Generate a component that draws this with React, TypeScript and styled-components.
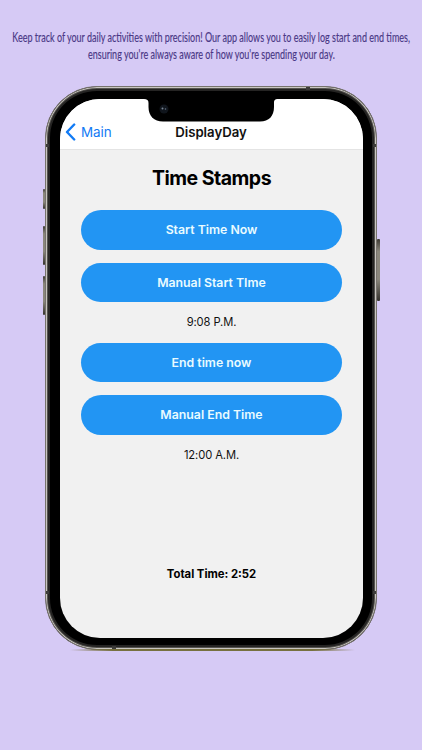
import React from "react";
import styled, { createGlobalStyle } from "styled-components";

const GlobalStyle = createGlobalStyle`
  * { box-sizing: border-box; }
  body { margin: 0; background: #d6caf5; font-family: Inter, "Liberation Sans", sans-serif; }
`;

const Page = styled.main`
  width: 422px;
  height: 750px;
  overflow: hidden;
  background: #d6caf5;
  display: flex;
  flex-direction: column;
  align-items: center;
`;

const Caption = styled.header`
  height: 86px;
  padding-top: 29px;
  display: flex;
  flex-direction: column;
  align-items: center;
`;

const CaptionLine = styled.p<{ $stretch: number }>`
  margin: 0;
  font: 400 12.5px/17px Lato, sans-serif;
  color: #4a3886;
  white-space: nowrap;
  -webkit-text-stroke: 0.15px #4a3886;
  transform: scaleX(${(p) => p.$stretch});
`;

const Phone = styled.section`
  position: relative;
  width: 332px;
  height: 564px;
  padding: 12px 13px 11px 14px;
  border-radius: 52px;
  background: #000;
  border: 1px solid #77736d;
  box-shadow: inset 0 0 0 1px #c9c6c1, inset 0 0 0 2px #55534f, inset 0 0 0 4px #252423;
`;

const SideKey = styled.i<{ $side: "left" | "right"; $top: number; $height: number }>`
  position: absolute;
  ${(p) => p.$side}: ${(p) => (p.$side === "left" ? -3 : -4)}px;
  top: ${(p) => p.$top}px;
  width: ${(p) => (p.$side === "left" ? 2 : 3)}px;
  height: ${(p) => p.$height}px;
  border-radius: 1px;
  background: linear-gradient(#3d3a33, #8b877c 20%, #8b877c 65%, #35322c);
`;

const AntennaBand = styled.i<{ $x: number; $y: number; $tall?: boolean }>`
  position: absolute;
  left: ${(p) => p.$x}px;
  top: ${(p) => p.$y}px;
  width: ${(p) => (p.$tall ? 4 : 3)}px;
  height: 3px;
  background: #3c3b39;
`;

const FloorGlow = styled.i`
  position: absolute;
  left: 24px;
  right: 21px;
  bottom: -2px;
  height: 2px;
  background: linear-gradient(90deg, transparent, #77703f 15%, #77703f 85%, transparent);
`;

const Screen = styled.div`
  position: relative;
  height: 100%;
  border-radius: 40px;
  overflow: hidden;
  background: #f1f1f1;
  display: flex;
  flex-direction: column;
`;

const Notch = styled.svg`
  position: absolute;
  left: 84px;
  top: 0;
`;

const NavBar = styled.nav`
  height: 51px;
  flex: none;
  padding: 16px 6px 0 5px;
  background: #fff;
  border-bottom: 1px solid #e4e4e4;
  display: grid;
  grid-template-columns: 1fr auto 1fr;
  align-items: center;
`;

const Back = styled.a`
  display: flex;
  align-items: center;
  gap: 5px;
  color: #127bf5;
  font-size: 13.4px;
`;

const Title = styled.span`
  font-size: 13.2px;
  font-weight: 600;
  color: #111;
`;

const Content = styled.div`
  flex: 1;
  padding: 15px 21px 0;
  display: flex;
  flex-direction: column;
  align-items: center;
`;

const Heading = styled.h1`
  margin: 0 0 18px;
  font-size: 19.5px;
  line-height: 27px;
  font-weight: 700;
  letter-spacing: -0.5px;
  color: #000;
`;

const Action = styled.button`
  width: 261px;
  height: 39.5px;
  flex: none;
  border: 0;
  padding: 0;
  border-radius: 20px;
  background: #2295f3;
  color: #e9fbff;
  font: 600 12.3px/39.5px Inter, sans-serif;
`;

const Group = styled.div`
  display: flex;
  flex-direction: column;
  align-items: center;
  gap: 13.2px;
`;

const Time = styled.span`
  height: 14px;
  font-size: 11.2px;
  line-height: 14px;
  letter-spacing: -0.1px;
  color: #111;
`;

const Total = styled.strong`
  margin-top: 105px;
  font-size: 11.3px;
  line-height: 14px;
  font-weight: 700;
  color: #000;
`;

const groups = [
  { now: "Start Time Now", manual: "Manual Start TIme", time: "9:08 P.M." },
  { now: "End time now", manual: "Manual End Time", time: "12:00 A.M." },
];

export default function App() {
  return (
    <Page>
      <GlobalStyle />
      <Caption>
        <CaptionLine $stretch={0.72}>
          Keep track of your daily activities with precision! Our app allows you to easily log start and end times,
        </CaptionLine>
        <CaptionLine $stretch={0.72}>ensuring you're always aware of how you're spending your day.</CaptionLine>
      </Caption>
      <Phone>
        <SideKey $side="left" $top={102} $height={20} />
        <SideKey $side="left" $top={139} $height={39} />
        <SideKey $side="left" $top={189} $height={39} />
        <SideKey $side="right" $top={152} $height={62} />
        <AntennaBand $x={0} $y={57} />
        <AntennaBand $x={327} $y={57} />
        <AntennaBand $x={0} $y={504} />
        <AntennaBand $x={327} $y={504} />
        <AntennaBand $x={260} $y={0} $tall />
        <AntennaBand $x={66} $y={559} $tall />
        <FloorGlow />
        <Screen>
          <NavBar>
            <Back>
              <svg width="11" height="18" viewBox="0 0 11 18" fill="none">
                <path d="M9.200 1.500 2 9l7.200 7.500" stroke="#127bf5" strokeWidth="2.400" strokeLinecap="round" strokeLinejoin="round" />
              </svg>
              Main
            </Back>
            <Title>DisplayDay</Title>
          </NavBar>
          <Notch width="134" height="24" viewBox="0 0 134 24">
            <path d="M0 0C3 0 4.500 1 4.500 4v4C4.500 17 10 22.500 19 22.500h97c9 0 14-5.500 14-14.500V4c0-3 1-4 4-4Z" fill="#000" />
            <circle cx="20" cy="10" r="4.500" fill="#10151c" />
            <circle cx="18.500" cy="9.500" r="1" fill="#7b8796" />
            <circle cx="21.500" cy="10" r=".8" fill="#657486" />
          </Notch>
          <Content>
            <Heading>Time Stamps</Heading>
            <Group>
              {groups.map((g) => (
                <Group key={g.now}>
                  <Action>{g.now}</Action>
                  <Action>{g.manual}</Action>
                  <Time>{g.time}</Time>
                </Group>
              ))}
            </Group>
            <Total>Total Time: 2:52</Total>
          </Content>
        </Screen>
      </Phone>
    </Page>
  );
}
